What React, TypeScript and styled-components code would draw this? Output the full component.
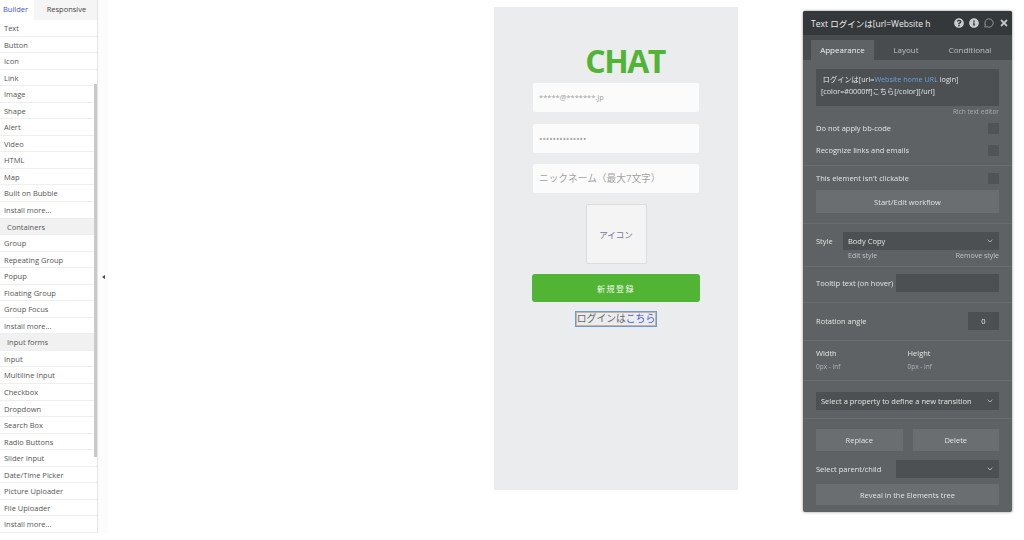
import React from 'react';
import styled, { createGlobalStyle } from 'styled-components';
import { ChevronDown, MessageCircle } from 'lucide-react';
import { FaInfoCircle, FaQuestionCircle, FaTimes } from 'react-icons/fa';

const GlobalStyle = createGlobalStyle`
  html, body {
    margin: 0;
    padding: 0;
    background: #fff;
    overflow: hidden;
  }
  * {
    box-sizing: border-box;
  }
`;

const Page = styled.div`
  width: 1024px;
  height: 540px;
  display: flex;
  align-items: flex-start;
  overflow: hidden;
  filter: blur(0.6px);
  font-family: 'Open Sans', 'Noto Sans CJK JP', sans-serif;
`;

const Sidebar = styled.aside`
  position: relative;
  width: 98px;
  height: 533px;
  flex: none;
  background: #fff;
  border-right: 1px solid #e4e4e4;
`;

const Scrollbar = styled.div`
  position: absolute;
  right: 0;
  top: 84px;
  width: 3px;
  height: 373px;
  background: #c9c9c9;
`;

const SideTabs = styled.div`
  display: flex;
  height: 20px;
`;

const SideTab = styled.div<{ $active?: boolean }>`
  font-size: 7.5px;
  line-height: 19px;
  width: ${(p) => (p.$active ? '34px' : '64px')};
  padding-left: ${(p) => (p.$active ? '3px' : '13px')};
  color: ${(p) => (p.$active ? '#3f51c4' : '#444')};
  background: ${(p) => (p.$active ? '#fff' : '#f5f5f5')};
`;

const SideRow = styled.div<{ $head?: boolean }>`
  height: 16.55px;
  font-size: 7.5px;
  line-height: 16px;
  color: #555;
  padding-left: ${(p) => (p.$head ? '7px' : '4px')};
  background: ${(p) => (p.$head ? '#f1f1f1' : '#fff')};
  border-bottom: 1px solid #eee;
  white-space: nowrap;
`;

const HandleStrip = styled.div`
  width: 10px;
  height: 533px;
  flex: none;
  background: #fcfcfc;
  padding: 275px 0 0 4px;
`;

const Handle = styled.div`
  width: 0;
  height: 0;
  border-top: 2.5px solid transparent;
  border-bottom: 2.5px solid transparent;
  border-right: 3px solid #445;
`;

const Preview = styled.main`
  width: 244px;
  height: 483px;
  flex: none;
  margin: 7px 0 0 386px;
  background: #ebecee;
  display: flex;
  flex-direction: column;
  align-items: center;
`;

const Logo = styled.h1`
  margin: 34px 0 0 18px;
  height: 42px;
  font-size: 32px;
  line-height: 40px;
  font-weight: 700;
  letter-spacing: -1.5px;
  color: #52b435;
`;

const Field = styled.div<{ $size: number }>`
  width: 166px;
  height: 29px;
  margin-bottom: 11.5px;
  padding-left: 6px;
  background: #fbfbfb;
  border-radius: 2px;
  font-size: ${(p) => p.$size}px;
  line-height: 29px;
  color: #a3a3a3;
  white-space: nowrap;
`;

const IconBox = styled.div`
  width: 61px;
  height: 60px;
  margin-top: -0.5px;
  background: #f4f4f4;
  border: 1px solid #dcdcdc;
  border-radius: 2px;
  display: flex;
  align-items: center;
  justify-content: center;
  font-size: 8.5px;
  color: #77779a;
`;

const SignUp = styled.div`
  width: 168px;
  height: 28px;
  margin-top: 10px;
  background: #52b435;
  border-radius: 3px;
  color: #f2f8ee;
  font-size: 8px;
  letter-spacing: 1.5px;
  display: flex;
  align-items: center;
  justify-content: center;
`;

const LoginLink = styled.div`
  width: 82px;
  height: 16px;
  margin-top: 9px;
  border: 1px solid #6a9bd8;
  outline: 1px solid #cdb399;
  outline-offset: -2px;
  font-size: 9.8px;
  line-height: 14px;
  text-align: center;
  color: #666;
  white-space: nowrap;
`;

const LinkPart = styled.span`
  color: #4a5bdc;
`;

const Panel = styled.section`
  width: 209px;
  height: 501px;
  flex: none;
  margin: 11px 0 0 65px;
  background: #5e6264;
  border-radius: 2px;
  box-shadow: 0 0 3px rgba(0, 0, 0, 0.45);
  color: #e4e6e6;
  font-size: 7.5px;
  overflow: hidden;
`;

const TitleBar = styled.header`
  height: 24px;
  background: #34383b;
  display: flex;
  align-items: center;
  padding: 0 3px 0 8px;
  font-size: 8.5px;
  color: #eee;
  white-space: nowrap;
`;

const TitleText = styled.span`
  flex: 1;
`;

const TitleIcons = styled.div`
  display: flex;
  gap: 5px;
  align-items: center;
  color: #c9cccd;
`;

const TabBar = styled.nav`
  height: 25px;
  padding: 5px 0 0 8px;
  background: #484c4e;
  display: flex;
`;

const PanelTab = styled.div<{ $active?: boolean; $width: number }>`
  width: ${(p) => p.$width}px;
  text-align: center;
  line-height: 20px;
  font-size: 8px;
  color: ${(p) => (p.$active ? '#eef0f0' : '#bcc0c1')};
  background: ${(p) => (p.$active ? '#5e6264' : 'transparent')};
`;

const Section = styled.div<{ $height: number; $top?: number; $line?: boolean }>`
  height: ${(p) => p.$height}px;
  padding: ${(p) => p.$top ?? 0}px 13px 0;
  border-bottom: ${(p) => (p.$line ? '1px solid #686c6e' : 'none')};
`;

const Editor = styled.div`
  height: 37px;
  background: #4c5052;
  padding: 4px 5px;
  font-size: 7.2px;
  line-height: 12px;
  white-space: nowrap;
  overflow: hidden;
`;

const BlueText = styled.span`
  color: #6e9fe0;
`;

const Hint = styled.div`
  text-align: right;
  font-size: 6.5px;
  line-height: 11px;
  color: #a8acad;
`;

const Row = styled.div<{ $height?: number }>`
  display: flex;
  align-items: center;
  justify-content: space-between;
  height: ${(p) => p.$height ?? 22}px;
  white-space: nowrap;
`;

const ParentRow = styled(Row)`
  margin: 9px 0 6px;
`;

const Check = styled.div`
  width: 11px;
  height: 11px;
  background: #505456;
`;

const Action = styled.div<{ $grow?: boolean; $height?: number }>`
  flex: ${(p) => (p.$grow ? '1' : 'none')};
  height: ${(p) => p.$height ?? 23}px;
  background: #6a6e70;
  display: flex;
  align-items: center;
  justify-content: center;
  color: #e2e4e4;
`;

const Dark = styled.div<{ $width: number }>`
  width: ${(p) => p.$width}px;
  height: 18px;
  flex: none;
  background: #4c5052;
  display: flex;
  align-items: center;
  justify-content: space-between;
  padding: 0 5px;
`;

const SubRow = styled.div`
  display: flex;
  justify-content: space-between;
  padding-left: 32px;
  font-size: 7px;
  line-height: 11px;
  color: #c0c4c5;
`;

const Dimension = styled.div`
  width: 92px;
  line-height: 13px;
`;

const DimensionValue = styled.div`
  font-size: 6.5px;
  color: #b0b4b5;
`;

const ButtonPair = styled.div`
  display: flex;
  gap: 10px;
`;

const elements = ['Text', 'Button', 'Icon', 'Link', 'Image', 'Shape', 'Alert', 'Video', 'HTML', 'Map', 'Built on Bubble', 'Install more...'];
const containers = ['Group', 'Repeating Group', 'Popup', 'Floating Group', 'Group Focus', 'Install more...'];
const inputs = ['Input', 'Multiline Input', 'Checkbox', 'Dropdown', 'Search Box', 'Radio Buttons', 'Slider Input', 'Date/Time Picker', 'Picture Uploader', 'File Uploader', 'Install more...'];

export default function App() {
  return (
    <>
      <GlobalStyle />
      <Page>
        <Sidebar>
          <Scrollbar />
          <SideTabs>
            <SideTab $active>Builder</SideTab>
            <SideTab>Responsive</SideTab>
          </SideTabs>
          {elements.map((name) => (
            <SideRow key={name}>{name}</SideRow>
          ))}
          <SideRow $head>Containers</SideRow>
          {containers.map((name) => (
            <SideRow key={name}>{name}</SideRow>
          ))}
          <SideRow $head>Input forms</SideRow>
          {inputs.map((name) => (
            <SideRow key={name}>{name}</SideRow>
          ))}
        </Sidebar>
        <HandleStrip>
          <Handle />
        </HandleStrip>
        <Preview>
          <Logo>CHAT</Logo>
          <Field $size={7.5}>*****@*******.jp</Field>
          <Field $size={9}>••••••••••••••</Field>
          <Field $size={9.7}>ニックネーム（最大7文字）</Field>
          <IconBox>アイコン</IconBox>
          <SignUp>新規登録</SignUp>
          <LoginLink>
            ログインは<LinkPart>こちら</LinkPart>
          </LoginLink>
        </Preview>
        <Panel>
          <TitleBar>
            <TitleText>Text ログインは[url=Website h</TitleText>
            <TitleIcons>
              <FaQuestionCircle size={10} />
              <FaInfoCircle size={10} />
              <MessageCircle size={10} strokeWidth={1.5} />
              <FaTimes size={10} />
            </TitleIcons>
          </TitleBar>
          <TabBar>
            <PanelTab $active $width={63}>Appearance</PanelTab>
            <PanelTab $width={64}>Layout</PanelTab>
            <PanelTab $width={64}>Conditional</PanelTab>
          </TabBar>
          <Section $height={106} $top={9} $line>
            <Editor>
              &nbsp;ログインは[url=<BlueText>Website home URL</BlueText> login]
              <br />
              [color=#0000ff]こちら[/color][/url]
            </Editor>
            <Hint>Rich text editor</Hint>
            <Row $height={22}>
              Do not apply bb-code
              <Check />
            </Row>
            <Row $height={22}>
              Recognize links and emails
              <Check />
            </Row>
          </Section>
          <Section $height={58} $line>
            <Row $height={24}>
              This element isn't clickable
              <Check />
            </Row>
            <Action>Start/Edit workflow</Action>
          </Section>
          <Section $height={43} $top={8} $line>
            <Row $height={18}>
              Style
              <Dark $width={156}>
                Body Copy
                <ChevronDown size={8} />
              </Dark>
            </Row>
            <SubRow>
              <span>Edit style</span>
              <span>Remove style</span>
            </SubRow>
          </Section>
          <Section $height={36} $top={7} $line>
            <Row $height={18}>
              Tooltip text (on hover)
              <Dark $width={103} />
            </Row>
          </Section>
          <Section $height={38} $top={9} $line>
            <Row $height={18}>
              Rotation angle
              <Dark $width={31}>
                <span />0<span />
              </Dark>
            </Row>
          </Section>
          <Section $height={40} $line>
            <Row $height={38}>
              <Dimension>
                Width
                <DimensionValue>0px - inf</DimensionValue>
              </Dimension>
              <Dimension>
                Height
                <DimensionValue>0px - inf</DimensionValue>
              </Dimension>
            </Row>
          </Section>
          <Section $height={38} $top={11} $line>
            <Row $height={18}>
              <Dark $width={183}>
                Select a property to define a new transition
                <ChevronDown size={8} />
              </Dark>
            </Row>
          </Section>
          <Section $height={93} $top={10}>
            <ButtonPair>
              <Action $grow $height={22}>Replace</Action>
              <Action $grow $height={22}>Delete</Action>
            </ButtonPair>
            <ParentRow $height={18}>
              Select parent/child
              <Dark $width={103}>
                <span />
                <ChevronDown size={8} />
              </Dark>
            </ParentRow>
            <Action $height={21}>Reveal in the Elements tree</Action>
          </Section>
        </Panel>
      </Page>
    </>
  );
}
